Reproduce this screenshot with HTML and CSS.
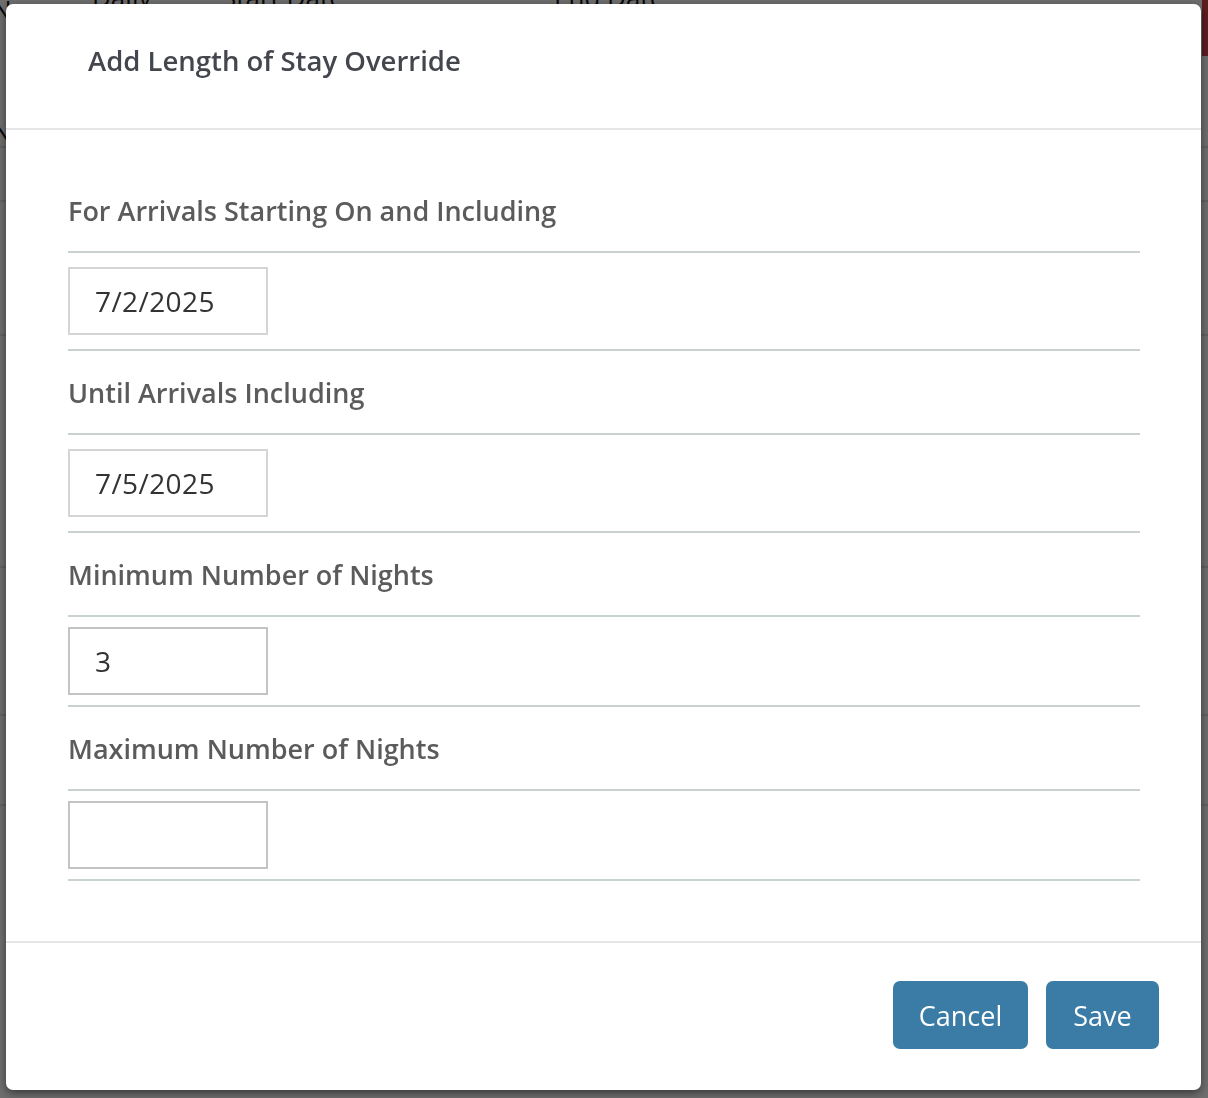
FILE: index.html
```html
<!DOCTYPE html>
<html lang="en">
<head>
<meta charset="utf-8">
<title>Add Length of Stay Override</title>
<link rel="stylesheet" href="styles.css">
</head>
<body>
<div class="page">
  <div class="page-head">
    <span class="ph-n">N</span>
    <span class="ph-daily">Daily</span>
    <span class="ph-start">Start Date</span>
    <span class="ph-end">End Date</span>
  </div>
  <div class="page-row r1"><span class="ph-n">N</span></div>
  <div class="page-row r2"></div>
  <div class="page-row r3"></div>
  <div class="page-row r4"></div>
  <div class="page-row r5"></div>
  <div class="page-row r6"></div>
  <div class="red-tab"></div>
</div>
<div class="overlay"></div>
<div class="modal">
  <div class="modal-header">
    <h4 class="modal-title">Add Length of Stay Override</h4>
  </div>
  <div class="modal-body">
    <div class="field-label">For Arrivals Starting On and Including</div>
    <div class="field-input field-input--date"><input class="box" type="text" value="7/2/2025"></div>
    <div class="field-label">Until Arrivals Including</div>
    <div class="field-input field-input--date"><input class="box" type="text" value="7/5/2025"></div>
    <div class="field-label">Minimum Number of Nights</div>
    <div class="field-input"><input class="box box--num" type="text" value="3"></div>
    <div class="field-label">Maximum Number of Nights</div>
    <div class="field-input"><input class="box box--num" type="text" value=""></div>
  </div>
  <div class="modal-footer">
    <button class="btn btn-cancel" type="button">Cancel</button>
    <button class="btn btn-save" type="button">Save</button>
  </div>
</div>
</body>
</html>
```
FILE: styles.css
```css
html, body {
  margin: 0;
  padding: 0;
}
body {
  width: 1208px;
  height: 1098px;
  overflow: hidden;
  background: #ffffff;
  font-family: "Open Sans", "Liberation Sans", sans-serif;
}
.page {
  width: 1208px;
  height: 1098px;
  background: #dcdcdc;
  position: relative;
}
.page-head {
  height: 28px;
  position: relative;
  font-size: 26px;
  color: #111;
}
.page-head span,
.page-row span {
  position: absolute;
  line-height: 30px;
}
.ph-n { left: -8px; top: -6px; }
.ph-daily { left: 92px; top: -18px; }
.ph-start { left: 222px; top: -18px; }
.ph-end { left: 554px; top: -18px; }
.page-row {
  border-bottom: 2px solid #c4c4c4;
  position: relative;
  font-size: 26px;
  color: #111;
}
.r1 { height: 118px; }
.r1 span { left: -8px; top: 88px; }
.r2 { height: 52px; }
.r3 { height: 132px; }
.r4 { height: 230px; }
.r5 { height: 146px; }
.r6 { height: 88px; }
.red-tab {
  position: absolute;
  right: 0;
  top: 0;
  width: 6px;
  height: 56px;
  background: #b53a3f;
}
.overlay {
  position: fixed;
  inset: 0;
  background: rgba(0, 0, 0, 0.5);
}
.modal {
  position: fixed;
  left: 6px;
  top: 4px;
  width: 1195px;
  height: 1086px;
  background: #ffffff;
  border-radius: 7px;
  box-shadow: 0 3px 9px rgba(0, 0, 0, 0.5);
  display: flex;
  flex-direction: column;
}
.modal-header {
  height: 124px;
  border-bottom: 2px solid #e5e5e5;
  display: flex;
  align-items: center;
  padding-left: 82px;
  box-sizing: content-box;
}
.modal-title {
  margin: 0;
  font-size: 27.5px;
  font-weight: 600;
  color: #43464c;
  line-height: 30px;
  position: relative;
  top: -5px;
}
.modal-body {
  padding: 39px 61px 60px 62px;
  border-bottom: 2px solid #e5e5e5;
}
.field-label {
  padding: 27px 0 25px;
  line-height: 30px;
  font-size: 27px;
  font-weight: 600;
  color: #5b5b5b;
  border-bottom: 2px solid #c9d1d1;
}
.field-input {
  padding: 10px 0;
  border-bottom: 2px solid #c9d1d1;
}
.field-input--date {
  padding: 14px 0;
}
.box {
  display: block;
  box-sizing: border-box;
  width: 200px;
  height: 68px;
  margin: 0;
  border: 2px solid #d5d5d5;
  border-radius: 0;
  padding: 0 0 0 25px;
  font-family: "Open Sans", "Liberation Sans", sans-serif;
  font-size: 28px;
  letter-spacing: 0.4px;
  color: #333333;
  background: #ffffff;
  outline: none;
}
.box--num {
  border-color: #c4c4c4;
}
.modal-footer {
  flex: 1;
  display: flex;
  justify-content: flex-end;
  align-items: flex-start;
  gap: 18px;
  padding: 38px 42px 0 0;
}
.btn {
  height: 68px;
  border: none;
  border-radius: 7px;
  background: #3a7ca5;
  color: #ffffff;
  font-family: "Open Sans", "Liberation Sans", sans-serif;
  font-size: 27px;
  padding: 0;
  cursor: pointer;
}
.btn-cancel { width: 135px; }
.btn-save { width: 113px; }
```
